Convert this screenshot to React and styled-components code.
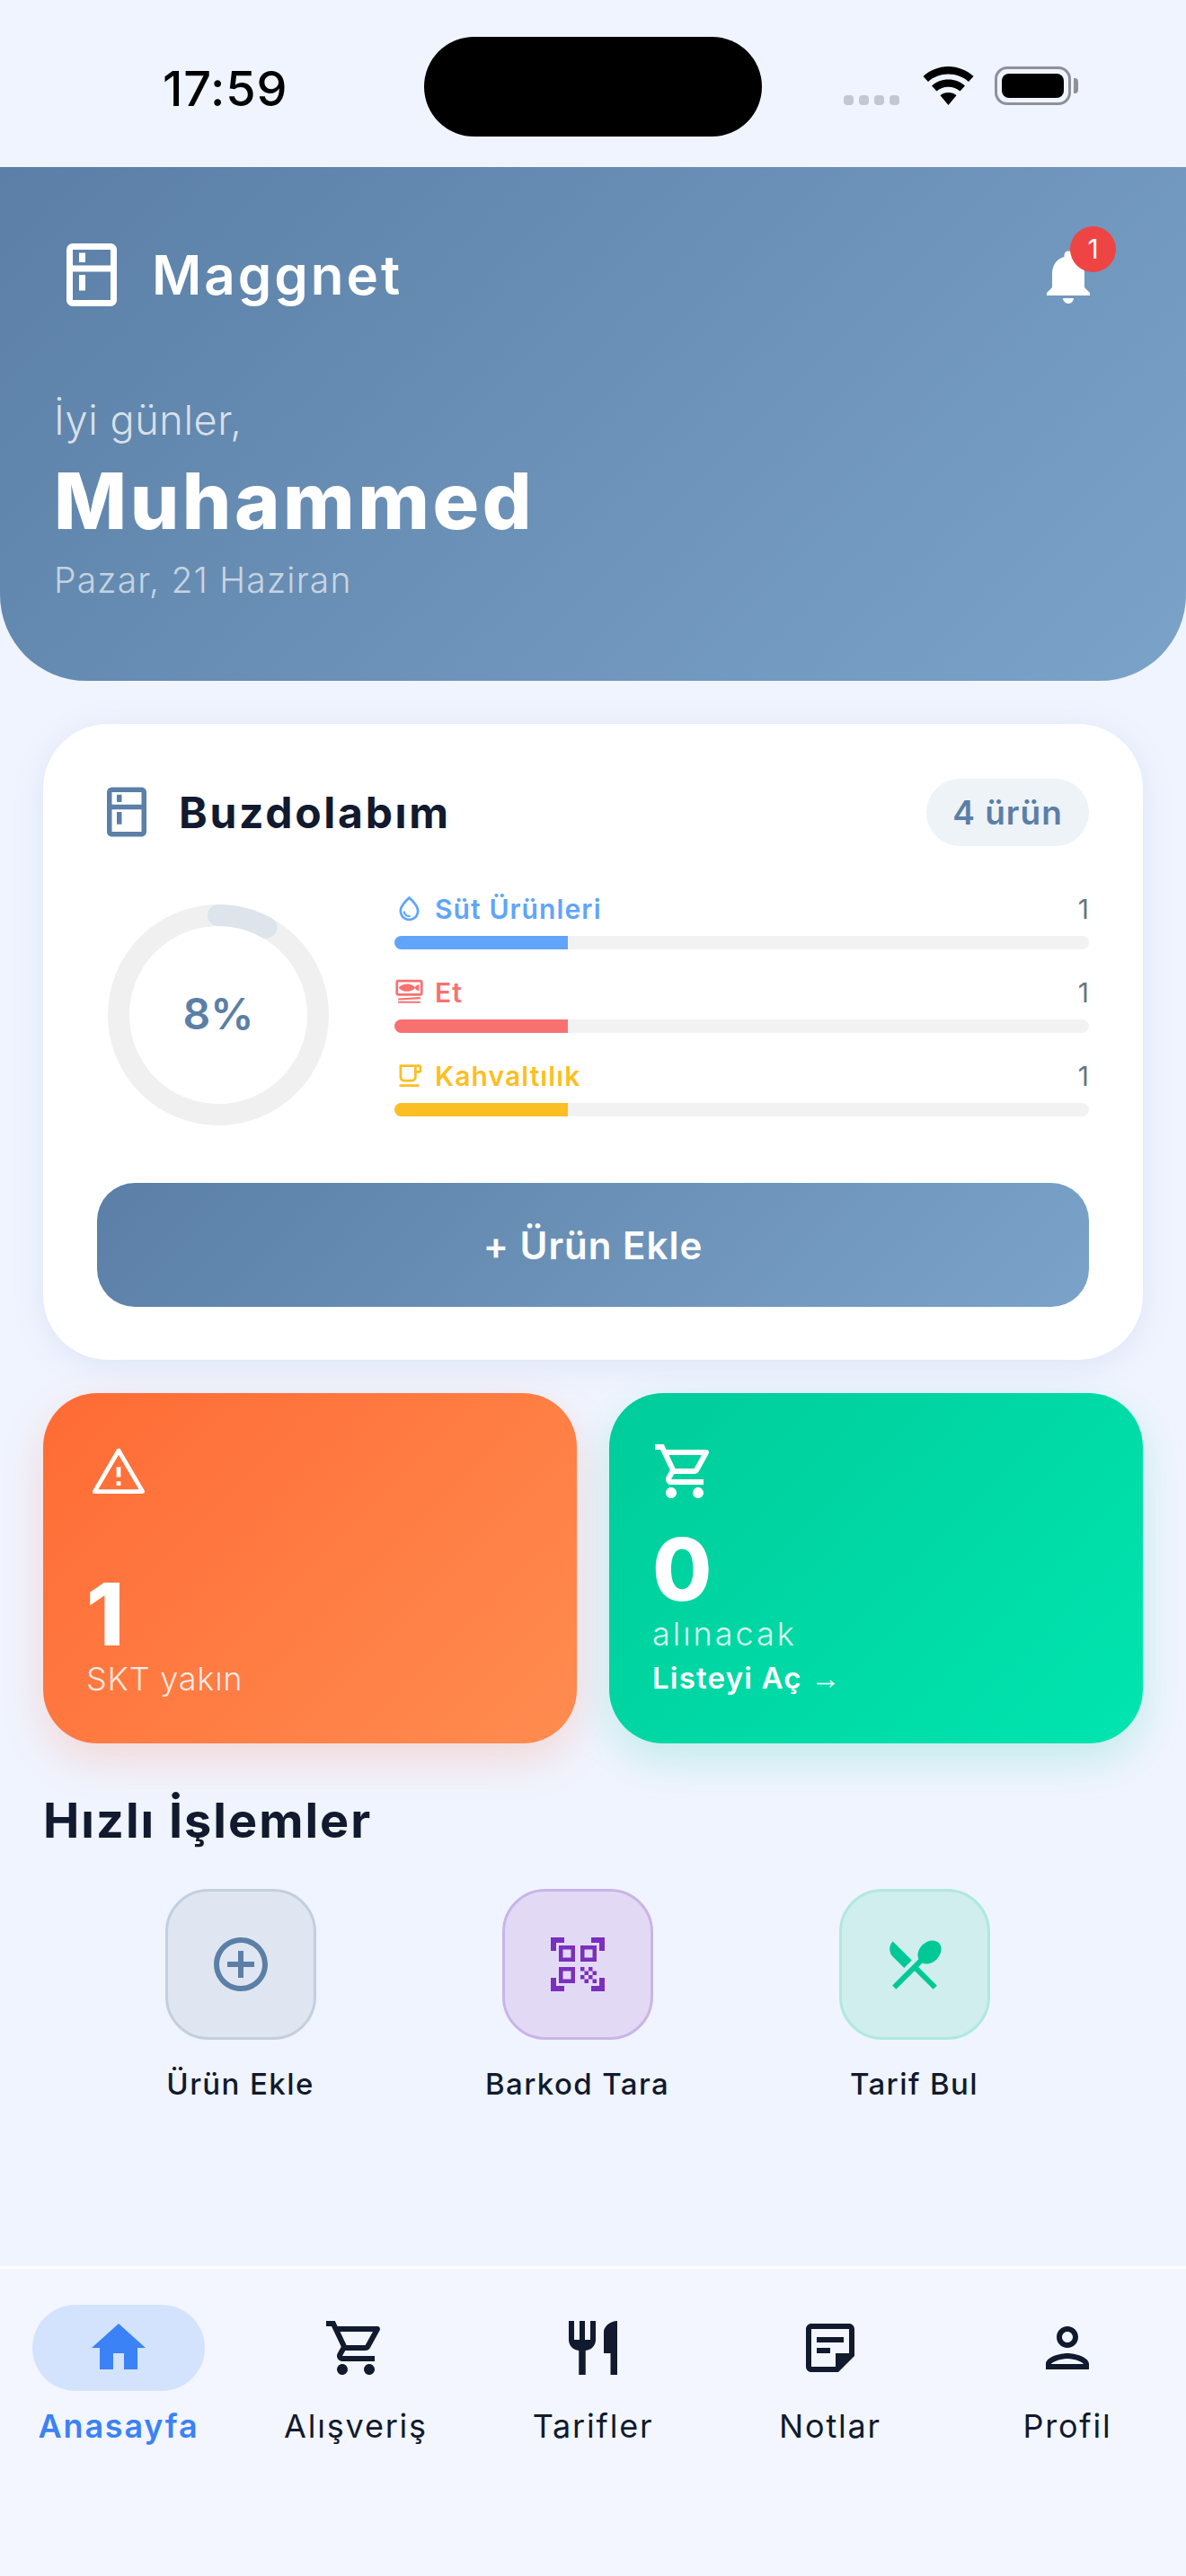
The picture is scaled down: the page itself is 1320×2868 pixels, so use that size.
import React from 'react'
import styled, { createGlobalStyle } from 'styled-components'
import {
  MdOutlineKitchen,
  MdNotifications,
  MdOutlineWaterDrop,
  MdOutlineSetMeal,
  MdOutlineFreeBreakfast,
  MdOutlineShoppingCart,
  MdAddCircleOutline,
  MdQrCodeScanner,
  MdRestaurantMenu,
  MdRestaurant,
  MdHome,
  MdOutlineStickyNote2,
  MdOutlinePerson,
} from 'react-icons/md'

const GlobalStyle = createGlobalStyle`
  html, body { margin: 0; padding: 0; background: #f0f4ff; }
  * { box-sizing: border-box; }
  body { font-family: Inter, "Noto Sans", sans-serif; color: #111a2e; }
`

const Page = styled.div`
  width: 1320px;
  height: 2868px;
  display: flex;
  flex-direction: column;
  overflow: hidden;
  background: #f0f4ff;
`

const StatusBar = styled.div`
  height: 186px;
  display: grid;
  grid-template-columns: 472px 376px 1fr;
  padding-top: 41px;
`
const Time = styled.div`
  padding: 34px 0 0 181px;
  font-size: 54px;
  line-height: 48px;
  font-weight: 500;
  letter-spacing: 0.8px;
  color: #000;
`
const Island = styled.div`
  height: 111px;
  background: #000;
  border-radius: 56px;
`
const StatusIcons = styled.div`
  display: flex;
  align-items: flex-end;
  height: 76px;
  padding-left: 91px;
`
const SignalDots = styled.div`
  display: flex;
  gap: 6px;
  margin-right: 26px;
`
const Dot = styled.span`
  width: 11px;
  height: 11px;
  border-radius: 4px;
  background: #c3c7d3;
`
const Battery = styled.div`
  position: relative;
  width: 85px;
  height: 43px;
  margin-left: 23px;
  padding: 5px;
  border: 3px solid #8e919c;
  border-radius: 14px;
`
const BatteryFill = styled.div`
  height: 100%;
  background: #000;
  border-radius: 8px;
`
const BatteryNub = styled.span`
  position: absolute;
  right: -11px;
  top: 10px;
  width: 5px;
  height: 17px;
  border-radius: 0 4px 4px 0;
  background: #8e919c;
`

const Header = styled.header`
  height: 572px;
  padding: 78px 60px 0;
  background: linear-gradient(135deg, #5b7fa6, #7ba3c9);
  border-radius: 0 0 96px 96px;
  color: #fff;
`
const HeaderTop = styled.div`
  display: flex;
  align-items: center;
  justify-content: space-between;
`
const Brand = styled.div`
  display: flex;
  align-items: center;
  gap: 25px;
  font-size: 60px;
  font-weight: 600;
  letter-spacing: 3px;
`
const BellWrap = styled.div`
  position: relative;
  width: 72px;
  height: 72px;
  margin: 4px 35px 0 0;
`
const Badge = styled.span`
  position: absolute;
  top: -20px;
  right: -17px;
  width: 51px;
  height: 51px;
  border-radius: 50%;
  background: #ef4444;
  font-size: 30px;
  line-height: 51px;
  text-align: center;
  color: #fff;
`
const Greeting = styled.div`
  margin-top: 90px;
  font-size: 45px;
  line-height: 60px;
  font-weight: 300;
  letter-spacing: 0.6px;
  color: rgba(255, 255, 255, 0.75);
`
const UserName = styled.div`
  margin-top: 9px;
  font-size: 86px;
  line-height: 102px;
  font-weight: 800;
  letter-spacing: 3.5px;
`
const DateLine = styled.div`
  margin-top: 10px;
  font-size: 39px;
  line-height: 54px;
  font-weight: 300;
  letter-spacing: 1.2px;
  color: rgba(255, 255, 255, 0.65);
`

const FridgeCard = styled.section`
  margin: 48px 48px 0;
  height: 708px;
  padding: 60px;
  background: #fff;
  border-radius: 72px;
  box-shadow: 0 6px 36px rgba(91, 127, 166, 0.12);
`
const CardHead = styled.div`
  display: flex;
  align-items: center;
  justify-content: space-between;
  height: 76px;
`
const CardTitle = styled.h2`
  display: flex;
  align-items: center;
  gap: 25px;
  margin: 0;
  font-size: 48px;
  font-weight: 700;
  letter-spacing: 2.7px;
  color: #111a2e;
`
const CountPill = styled.span`
  width: 181px;
  height: 75px;
  border-radius: 38px;
  background: #eef3f7;
  font-size: 37px;
  line-height: 75px;
  font-weight: 600;
  letter-spacing: 1px;
  text-align: center;
  color: #5b7fa6;
`
const FridgeBody = styled.div`
  display: flex;
  align-items: flex-start;
  margin-top: 59px;
`
const Ring = styled.div`
  position: relative;
  width: 246px;
  height: 246px;
  margin: 6px 73px 0 12px;
  flex: none;
`
const RingValue = styled.div`
  position: absolute;
  inset: 0 0 4px;
  display: flex;
  align-items: center;
  justify-content: center;
  font-size: 48px;
  font-weight: 600;
  color: #5b7fa6;
`
const Categories = styled.div`
  flex: 1;
  display: flex;
  flex-direction: column;
  gap: 27px;
  margin-top: -10px;
`
const CatRow = styled.div`
  display: flex;
  flex-direction: column;
  gap: 10px;
`
const CatHead = styled.div`
  display: flex;
  align-items: center;
  height: 41px;
  font-size: 30px;
  font-weight: 600;
  color: ${p => p.$color};
`
const CatName = styled.span`
  flex: 1;
  margin-left: 12px;
  letter-spacing: 1.1px;
`
const CatCount = styled.span`
  font-weight: 400;
  color: #6b7280;
`
const Track = styled.div`
  height: 15px;
  border-radius: 9px;
  background: #f2f2f2;
  overflow: hidden;
`
const Fill = styled.div`
  height: 100%;
  background: ${p => p.$color};
`
const AddButton = styled.button`
  display: block;
  width: 100%;
  height: 138px;
  margin-top: 64px;
  border: 0;
  border-radius: 42px;
  background: linear-gradient(135deg, #5b7fa6, #7ba3c9);
  font-family: inherit;
  font-size: 42px;
  font-weight: 600;
  letter-spacing: 1px;
  color: #fff;
`

const Stats = styled.div`
  display: grid;
  grid-template-columns: 1fr 1fr;
  gap: 36px;
  margin: 37px 48px 0;
`
const StatCard = styled.div`
  height: 390px;
  display: flex;
  flex-direction: column;
  justify-content: space-between;
  padding: 51px 48px 48px;
  border-radius: 60px;
  color: #fff;
  background: ${p => p.$bg};
  box-shadow: 0 18px 48px ${p => p.$shadow};
`
const StatValue = styled.div`
  font-size: 96px;
  line-height: 96px;
  font-weight: 800;
`
const StatLabel = styled.div`
  font-size: 36px;
  line-height: 48px;
  font-weight: 300;
  letter-spacing: ${p => p.$spacing}px;
  color: rgba(255, 255, 255, 0.85);
`
const StatLink = styled.div`
  margin-top: 1px;
  font-size: 33px;
  line-height: 48px;
  font-weight: 600;
  letter-spacing: 1.2px;
`
const LinkArrow = styled.span`
  font-family: "Liberation Sans", sans-serif;
  font-weight: 400;
  letter-spacing: 0;
`
const WarningSvg = styled.svg`
  margin: 5px 0 0 4px;
`

const SectionTitle = styled.h2`
  margin: 52px 0 0 48px;
  font-size: 54px;
  line-height: 68px;
  font-weight: 700;
  letter-spacing: 2px;
  color: #111a2e;
`
const Actions = styled.div`
  display: grid;
  grid-template-columns: repeat(3, 375px);
  margin: 42px 0 0 80px;
`
const Action = styled.div`
  display: flex;
  flex-direction: column;
  align-items: center;
  gap: 28px;
`
const ActionIcon = styled.div`
  width: 168px;
  height: 168px;
  display: flex;
  align-items: center;
  justify-content: center;
  border-radius: 48px;
  border: 3px solid ${p => p.$border};
  background: ${p => p.$bg};
  color: ${p => p.$color};
`
const ActionLabel = styled.div`
  font-size: 33px;
  line-height: 42px;
  font-weight: 450;
  letter-spacing: 1.4px;
  color: #111a2e;
`

const Nav = styled.nav`
  margin-top: auto;
  height: 345px;
  padding-top: 40px;
  display: grid;
  grid-template-columns: repeat(5, 1fr);
  align-items: start;
  border-top: 3px solid #fff;
  background: #f3f6ff;
`
const Tab = styled.div`
  display: flex;
  flex-direction: column;
  align-items: center;
  gap: 15px;
`
const TabIcon = styled.div`
  width: 192px;
  height: 96px;
  display: flex;
  align-items: center;
  justify-content: center;
  border-radius: 48px;
  background: ${p => (p.$active ? '#d3e3fd' : 'transparent')};
  color: ${p => (p.$active ? '#3b82f6' : '#111a2e')};
`
const TabLabel = styled.div`
  font-size: 36px;
  line-height: 48px;
  font-weight: ${p => (p.$active ? 600 : 400)};
  letter-spacing: 1.8px;
  color: ${p => (p.$active ? '#3b82f6' : '#111a2e')};
`

const categories = [
  { name: 'Süt Ürünleri', color: '#60a5fa', Icon: MdOutlineWaterDrop },
  { name: 'Et', color: '#f87171', Icon: MdOutlineSetMeal },
  { name: 'Kahvaltılık', color: '#fbbf24', Icon: MdOutlineFreeBreakfast },
]

const actions = [
  { label: 'Ürün Ekle', bg: '#dfe6f1', border: '#c3cfde', color: '#5b7fa6', Icon: MdAddCircleOutline },
  { label: 'Barkod Tara', bg: '#e2daf5', border: '#c9b5e8', color: '#7b2fbe', Icon: MdQrCodeScanner },
  { label: 'Tarif Bul', bg: '#d0eeee', border: '#b0e8de', color: '#00c896', Icon: MdRestaurantMenu },
]

const tabs = [
  { label: 'Anasayfa', Icon: MdHome, active: true },
  { label: 'Alışveriş', Icon: MdOutlineShoppingCart },
  { label: 'Tarifler', Icon: MdRestaurant },
  { label: 'Notlar', Icon: MdOutlineStickyNote2 },
  { label: 'Profil', Icon: MdOutlinePerson },
]

function WifiIcon() {
  return (
    <svg width="57" height="43" viewBox="0 0 57 43" fill="#000">
      <path d="M28.5 0C18 0 8 4 0.5 11l5.5 6C12 11.500 20 8.500 28.500 8.500S45 11.500 51 17l5.500-6C49 4 39 0 28.500 0z" />
      <path d="M28.500 14.500c-7 0-13.500 2.600-18.500 7l5.500 6c3.500-3 8-4.700 13-4.700s9.500 1.700 13 4.700l5.500-6c-5-4.400-11.500-7-18.500-7z" />
      <path d="M28.500 29c-3.400 0-6.500 1.200-9 3.200L28.500 43l9-10.800c-2.500-2-5.600-3.200-9-3.200z" />
    </svg>
  )
}

function WarningIcon() {
  return (
    <WarningSvg width="64" height="64" viewBox="0 0 24 24" fill="none" stroke="#fff" strokeWidth="1.800" strokeLinejoin="round">
      <path d="M12 3 2 20.100h20L12 3z" />
      <path d="M12 9.800v4.300M12 15.800v1.800" />
    </WarningSvg>
  )
}

function ProgressRing() {
  const r = 111
  const c = 2 * Math.PI * r
  return (
    <svg width="246" height="246" viewBox="0 0 246 246">
      <circle cx="123" cy="123" r={r} fill="none" stroke="#f0f0f0" strokeWidth="24" />
      <circle
        cx="123"
        cy="123"
        r={r}
        fill="none"
        stroke="#dde4eb"
        strokeWidth="24"
        strokeLinecap="round"
        strokeDasharray={`${c * 0.08} ${c}`}
        transform="rotate(-90 123 123)"
      />
    </svg>
  )
}

export default function App() {
  return (
    <Page>
      <GlobalStyle />
      <StatusBar>
        <Time>17:59</Time>
        <Island />
        <StatusIcons>
          <SignalDots>
            <Dot /><Dot /><Dot /><Dot />
          </SignalDots>
          <WifiIcon />
          <Battery>
            <BatteryFill />
            <BatteryNub />
          </Battery>
        </StatusIcons>
      </StatusBar>

      <Header>
        <HeaderTop>
          <Brand>
            <MdOutlineKitchen size={84} />
            Maggnet
          </Brand>
          <BellWrap>
            <MdNotifications size={72} />
            <Badge>1</Badge>
          </BellWrap>
        </HeaderTop>
        <Greeting>İyi günler,</Greeting>
        <UserName>Muhammed</UserName>
        <DateLine>Pazar, 21 Haziran</DateLine>
      </Header>

      <FridgeCard>
        <CardHead>
          <CardTitle>
            <MdOutlineKitchen size={66} color="#5b7fa6" />
            Buzdolabım
          </CardTitle>
          <CountPill>4 ürün</CountPill>
        </CardHead>
        <FridgeBody>
          <Ring>
            <ProgressRing />
            <RingValue>8%</RingValue>
          </Ring>
          <Categories>
            {categories.map(({ name, color, Icon }) => (
              <CatRow key={name}>
                <CatHead $color={color}>
                  <Icon size={33} />
                  <CatName>{name}</CatName>
                  <CatCount>1</CatCount>
                </CatHead>
                <Track>
                  <Fill $color={color} style={{ width: '25%' }} />
                </Track>
              </CatRow>
            ))}
          </Categories>
        </FridgeBody>
        <AddButton>+ Ürün Ekle</AddButton>
      </FridgeCard>

      <Stats>
        <StatCard $bg="linear-gradient(135deg, #ff6b35, #ff8c50)" $shadow="rgba(255, 107, 53, 0.2)">
          <WarningIcon />
          <div>
            <StatValue>1</StatValue>
            <StatLabel $spacing={0.8}>SKT yakın</StatLabel>
          </div>
        </StatCard>
        <StatCard $bg="linear-gradient(135deg, #00cc9a, #00e5b0)" $shadow="rgba(0, 204, 154, 0.2)">
          <MdOutlineShoppingCart size={72} />
          <div>
            <StatValue>0</StatValue>
            <StatLabel $spacing={3}>alınacak</StatLabel>
            <StatLink>Listeyi Aç <LinkArrow>→</LinkArrow></StatLink>
          </div>
        </StatCard>
      </Stats>

      <SectionTitle>Hızlı İşlemler</SectionTitle>
      <Actions>
        {actions.map(({ label, bg, border, color, Icon }) => (
          <Action key={label}>
            <ActionIcon $bg={bg} $border={border} $color={color}>
              <Icon size={72} />
            </ActionIcon>
            <ActionLabel>{label}</ActionLabel>
          </Action>
        ))}
      </Actions>

      <Nav>
        {tabs.map(({ label, Icon, active }) => (
          <Tab key={label}>
            <TabIcon $active={active}>
              <Icon size={72} />
            </TabIcon>
            <TabLabel $active={active}>{label}</TabLabel>
          </Tab>
        ))}
      </Nav>
    </Page>
  )
}
